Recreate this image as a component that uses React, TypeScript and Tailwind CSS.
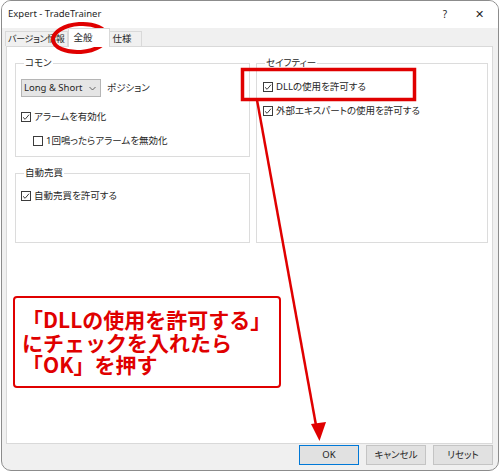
import React from "react";

const ui = "font-['Noto_Sans','Noto_Sans_CJK_JP',sans-serif] [font-feature-settings:'palt']";

const CheckBox = ({ checked }: { checked: boolean }) => (
  <span className="flex h-[10px] w-[10px] shrink-0 items-center justify-center border border-[#3c3c3c] bg-white">
    {checked && (
      <svg width="8" height="8" viewBox="0 0 8 8">
        <path d="M1 4.3 L3.1 6.3 L7 1.7" fill="none" stroke="#3c3c3c" strokeWidth="1" />
      </svg>
    )}
  </span>
);

const Row = ({ checked, label, className = "" }: { checked: boolean; label: string; className?: string }) => (
  <div className={`flex h-[12px] items-center gap-[3px] ${className}`}>
    <CheckBox checked={checked} />
    <span className="text-[9.5px] leading-[12px] text-[#262626]">{label}</span>
  </div>
);

const Group = ({ title, className = "", children }: { title: string; className?: string; children: React.ReactNode }) => (
  <fieldset className={`border border-[#dcdcdc] px-[5px] ${className}`}>
    <legend className="ml-[3px] px-[1px] text-[9.5px] leading-[12px] text-[#262626]">{title}</legend>
    {children}
  </fieldset>
);

const Button = ({ label, primary = false }: { label: string; primary?: boolean }) => (
  <button
    className={`flex h-[20px] w-[60px] items-center justify-center bg-[#e1e1e1] text-[9.5px] text-[#262626] ${
      primary ? "border border-[#0078d7]" : "border border-[#c4c4c4]"
    }`}
  >
    {label}
  </button>
);

export default function App() {
  return (
    <div className={`relative h-[472px] w-[500px] overflow-hidden bg-white ${ui}`}>
      <div className="ml-[1px] flex h-[471px] w-[498px] flex-col overflow-hidden rounded-[10px] border border-[#8c8c8c] bg-[#f0f0f0]">
        {/* title bar */}
        <div className="flex h-[27px] shrink-0 items-center bg-white pl-[6px] pr-[14px] text-[#1f1f1f]">
          <span className="text-[9.5px]">Expert - TradeTrainer</span>
          <span className="ml-auto text-[10px]">?</span>
          <span className="ml-[28px] text-[11px]">✕</span>
        </div>

        {/* tabs */}
        <div className="flex h-[18px] shrink-0 items-end whitespace-nowrap pl-[3px] text-[9.5px] text-[#262626]">
          <div className="flex h-[15px] items-center border border-b-0 border-[#d9d9d9] bg-[#f0f0f0] px-[2px] text-[9px] tracking-[-0.3px]">
            バージョン情報
          </div>
          <div className="relative z-10 -mb-px flex h-[19px] w-[42px] items-center border border-b-0 border-[#d9d9d9] bg-white pl-[5px]">
            全般
          </div>
          <div className="flex h-[15px] w-[32px] items-center border border-b-0 border-l-0 border-[#d9d9d9] bg-[#f0f0f0] pl-[3px]">
            仕様
          </div>
        </div>

        {/* panel */}
        <div className="ml-[4px] h-[398px] w-[487px] shrink-0 border border-[#d9d9d9] bg-white pl-[8px] pt-[10px]">
          <div className="grid grid-cols-[235px_232px] gap-x-[6px]">
            <div className="flex flex-col gap-[10px]">
              <Group title="コモン" className="h-[100px] pt-[10px]">
                <div className="flex items-center gap-[6px]">
                  <div className="flex h-[18px] w-[80px] items-center justify-between border border-[#b5b5b5] bg-[#e5e5e5] pl-[2px] pr-[4px] text-[9.5px] text-[#262626]">
                    <span>Long &amp; Short</span>
                    <svg width="7" height="5" viewBox="0 0 7 5">
                      <path d="M0.5 1 L3.5 4 L6.5 1" fill="none" stroke="#555" strokeWidth="0.9" />
                    </svg>
                  </div>
                  <span className="text-[9.5px] text-[#262626]">ポジション</span>
                </div>
                <Row checked label="アラームを有効化" className="mt-[14px]" />
                <Row checked={false} label="1回鳴ったらアラームを無効化" className="ml-[12px] mt-[12px]" />
              </Group>
              <Group title="自動売買" className="h-[76px] pt-[11px]">
                <Row checked label="自動売買を許可する" />
              </Group>
            </div>
            <Group title="セイフティー" className="h-[186px] pt-[12px]">
              <Row checked label="DLLの使用を許可する" className="ml-[1px]" />
              <Row checked label="外部エキスパートの使用を許可する" className="ml-[1px] mt-[12px]" />
            </Group>
          </div>
        </div>

        {/* buttons */}
        <div className="flex shrink-0 justify-end gap-[7px] pr-[5px] pt-[1px]">
          <Button label="OK" primary />
          <Button label="キャンセル" />
          <Button label="リセット" />
        </div>
      </div>

      {/* annotations */}
      <svg className="pointer-events-none absolute left-0 top-0" width="500" height="472" viewBox="0 0 500 472">
        <ellipse cx="80" cy="38" rx="27" ry="14" fill="none" stroke="#e00000" strokeWidth="4" transform="rotate(-4 80 38)" />
        <rect x="242.5" y="69.5" width="172" height="30" fill="none" stroke="#e00000" strokeWidth="3.5" />
        <line x1="257" y1="100" x2="316.5" y2="428" stroke="#e00000" strokeWidth="2.5" />
        <path d="M311 424 L326 422 L319.5 441 Z" fill="#e00000" />
      </svg>

      <div className="absolute left-[13px] top-[296px] flex h-[92px] w-[268px] flex-col justify-center rounded-[4px] border-2 border-[#e00000] bg-white pl-[7px] font-['Noto_Sans_CJK_JP',sans-serif] text-[21px] font-bold leading-[22.5px] text-[#e00000] [font-feature-settings:normal]">
        <span>「DLLの使用を許可する」</span>
        <span>にチェックを入れたら</span>
        <span>「OK」を押す</span>
      </div>
    </div>
  );
}
